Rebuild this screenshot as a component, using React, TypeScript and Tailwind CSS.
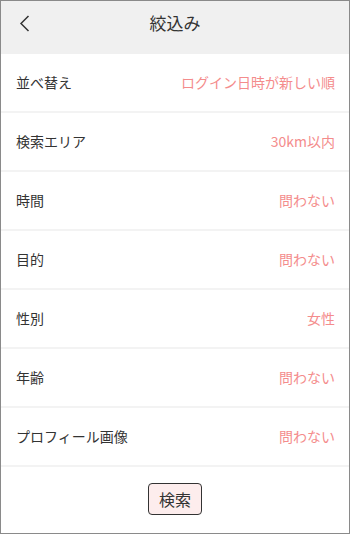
const rows = [
  { label: "並べ替え", value: "ログイン日時が新しい順" },
  { label: "検索エリア", value: "30km以内" },
  { label: "時間", value: "問わない" },
  { label: "目的", value: "問わない" },
  { label: "性別", value: "女性" },
  { label: "年齢", value: "問わない" },
  { label: "プロフィール画像", value: "問わない" },
];

export default function App() {
  return (
    <div
      className="w-[350px] h-[534px] border border-[#8a8a8a] bg-white flex flex-col text-[#333]"
      style={{ fontFamily: '"Noto Sans CJK JP", "Noto Sans", sans-serif' }}
    >
      <header className="h-[53px] bg-[#f0f0f0] flex items-start pt-[11px] relative shrink-0">
        <button className="absolute left-[18px] top-[14px]">
          <svg width="12" height="17" viewBox="0 0 12 17" fill="none">
            <polyline points="9.5,1 2,8.5 9.5,16" stroke="#333" strokeWidth="1.5" />
          </svg>
        </button>
        <h1 className="w-full text-center text-[17px] leading-[22px]">絞込み</h1>
      </header>
      <ul className="flex flex-col">
        {rows.map((row) => (
          <li
            key={row.label}
            className="h-[59px] flex items-center justify-between pl-[15px] pr-[14px] border-b-2 border-[#f3f3f3]"
          >
            <span className="text-[14px]">{row.label}</span>
            <span className="text-[14px] text-[#f48c8c]">{row.value}</span>
          </li>
        ))}
      </ul>
      <div className="flex-1 flex justify-center pt-[16px]">
        <button className="w-[54px] h-[32px] bg-[#fdeded] border border-[#333] rounded-[4px] text-[16px] leading-none">
          検索
        </button>
      </div>
    </div>
  );
}
